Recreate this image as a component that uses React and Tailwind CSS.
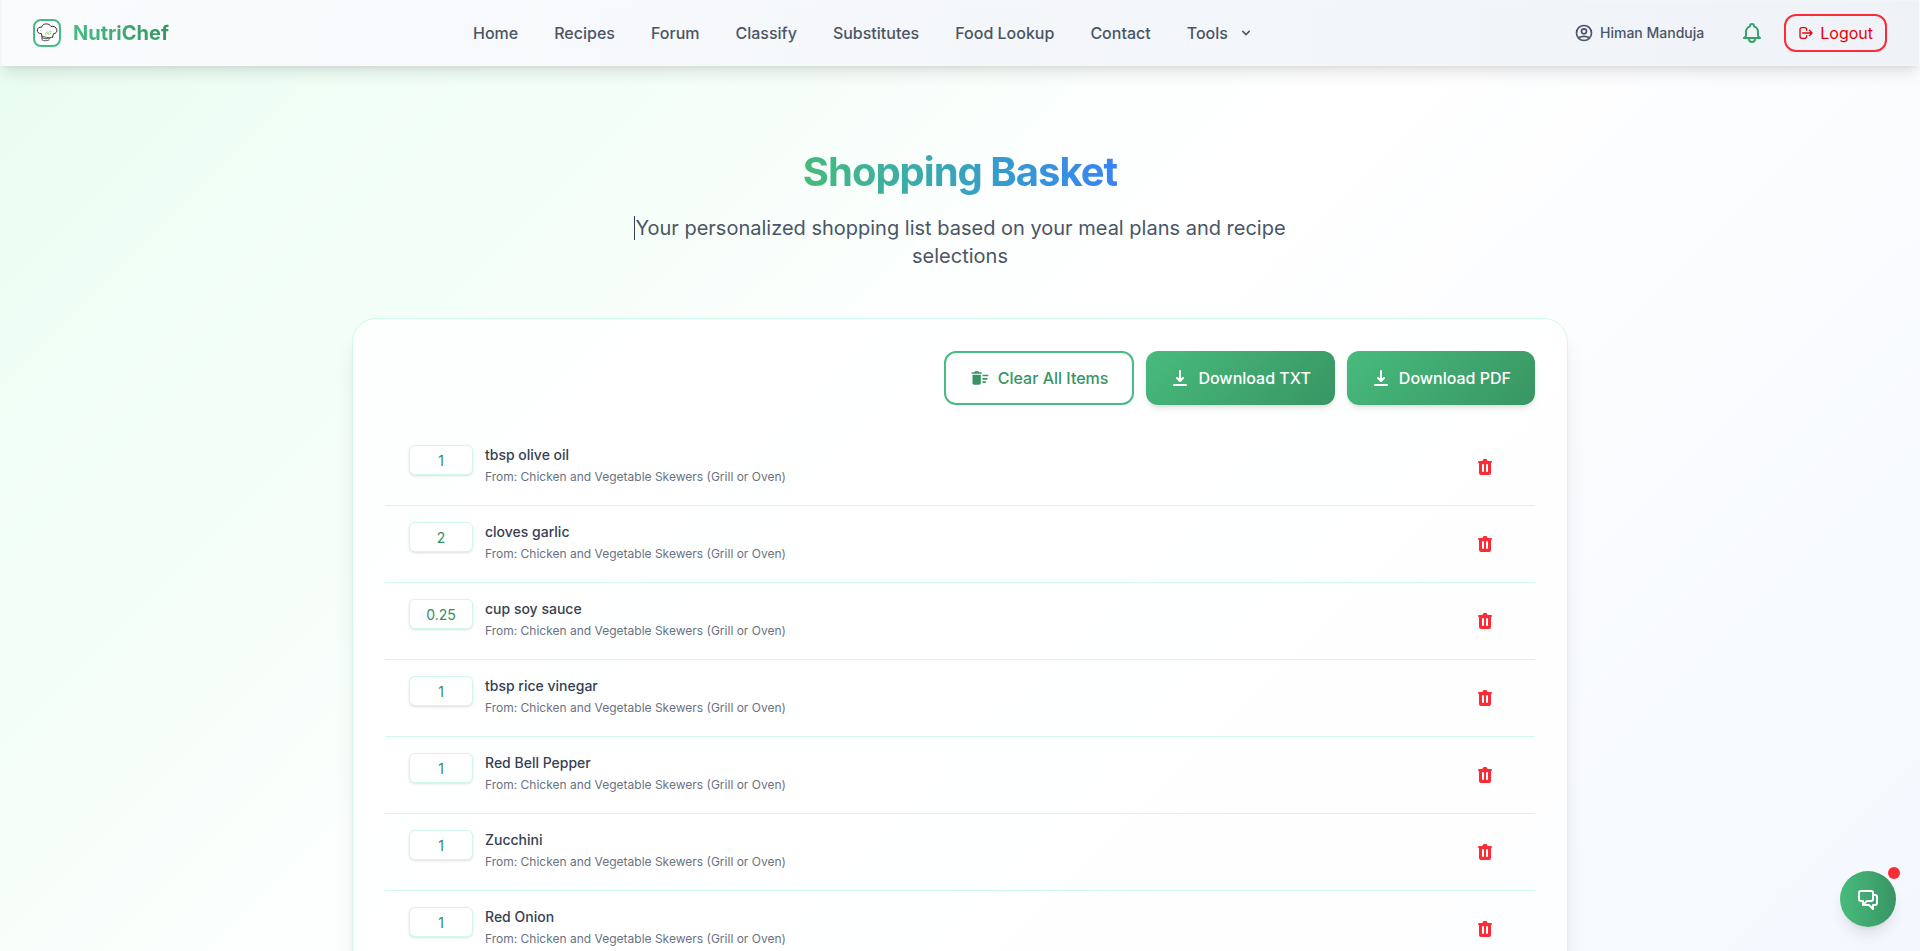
import React, { useState } from "react";
import {
  HiChevronDown,
  HiDownload,
  HiOutlineBell,
  HiOutlineChatAlt2,
  HiOutlineLogout,
  HiOutlineUserCircle,
  HiTrash,
} from "react-icons/hi";
import { MdDeleteSweep } from "react-icons/md";

const NAV_LINKS = ["Home", "Recipes", "Forum", "Classify", "Substitutes", "Food Lookup", "Contact"];

const SOURCE = "Chicken and Vegetable Skewers (Grill or Oven)";

const INITIAL_ITEMS = [
  { id: 1, quantity: "1", name: "tbsp olive oil" },
  { id: 2, quantity: "2", name: "cloves garlic" },
  { id: 3, quantity: "0.25", name: "cup soy sauce" },
  { id: 4, quantity: "1", name: "tbsp rice vinegar" },
  { id: 5, quantity: "1", name: "Red Bell Pepper" },
  { id: 6, quantity: "1", name: "Zucchini" },
  { id: 7, quantity: "1", name: "Red Onion" },
];

function ChefHat() {
  return (
    <svg viewBox="0 0 24 24" className="size-6" fill="none" aria-hidden="true">
      <path
        d="M7 15.2 6.4 12.6C3.6 12.6 2 11 2.3 9 2.6 7 4.4 5.8 6.5 6.2 7.3 4 9.2 2.8 11.4 2.9 13.6 2.9 15.1 3.9 16 5.4 18.6 4.8 21.2 6.2 21.8 8.6 22.2 11 20.7 12.6 18.4 12.8L17.6 16.4"
        stroke="#333"
        strokeWidth="1"
        strokeLinecap="round"
        strokeLinejoin="round"
      />
      <path d="M6.8 15.2C9.6 16.4 13.6 16.8 17.4 16.3M6.9 16.9C9.6 17.8 12.6 18 15 17.4M7 15.2V18.8C8.8 20 11.6 20.2 14 19" stroke="#444" strokeWidth="0.9" strokeLinecap="round" />
      <path d="M10.5 13.4C10.4 11.8 11.4 10.8 13 10.8 13 12.6 12.2 13.6 10.5 13.4ZM13.6 13.6C13.4 11.6 14.2 10.2 16 9.8 16.4 12 15.4 13.4 13.6 13.6Z" stroke="#a5d07f" strokeWidth="0.8" />
    </svg>
  );
}

function Header() {
  return (
    <header className="flex shrink-0 items-center justify-between border border-white/20 bg-linear-to-r from-[#fafbfd] to-[#eff3f8] px-8 py-[13px] shadow-lg">
      <a href="#home" className="flex items-center gap-3">
        <span className="flex size-7 items-center justify-center rounded-lg border-2 border-[#48bb84] bg-white">
          <ChefHat />
        </span>
        <span className="bg-linear-to-r from-[#48bb84] to-[#389563] bg-clip-text text-xl font-bold text-transparent">
          NutriChef
        </span>
      </a>

      <nav aria-label="Main" className="flex items-center gap-9 font-medium text-gray-600">
        {NAV_LINKS.map((label) => (
          <a key={label} href={"#" + label.toLowerCase().replace(" ", "-")}>
            {label}
          </a>
        ))}
        <button type="button" aria-haspopup="menu" className="flex items-center gap-2.5">
          Tools
          <HiChevronDown className="size-4" />
        </button>
      </nav>

      <div className="flex items-center">
        <a href="#profile" className="mr-9 flex items-center gap-1.5 pl-4 text-sm font-medium text-gray-600">
          <HiOutlineUserCircle className="size-5" />
          Himan Manduja
        </a>
        <button type="button" aria-label="Notifications" className="mr-5 text-[#38a169]">
          <HiOutlineBell className="size-6" />
        </button>
        <button
          type="button"
          className="flex items-center gap-1.5 rounded-xl border-2 border-[#fb2c36] px-3 py-1 leading-[26px] text-[#e7000b]"
        >
          <HiOutlineLogout className="size-4" />
          Logout
        </button>
      </div>
    </header>
  );
}

function BasketRow({ item, onQuantity, onRemove }) {
  return (
    <li className="flex items-center border-b border-[#cffbe6] px-6 py-4">
      <div className="flex grow gap-3 self-start">
        <input
          type="text"
          inputMode="decimal"
          aria-label={"Quantity of " + item.name}
          value={item.quantity}
          onChange={(event) => onQuantity(item.id, event.target.value)}
          className="h-[30px] w-16 rounded-md border border-[#cffbe6] bg-white text-center text-sm text-[#2f8f63] shadow-sm"
        />
        <div>
          <p className="text-sm font-medium text-gray-700">{item.name}</p>
          <p className="mt-1 text-xs text-gray-500">From: {SOURCE}</p>
        </div>
      </div>
      <button
        type="button"
        aria-label={"Remove " + item.name}
        onClick={() => onRemove(item.id)}
        className="px-4 py-3 text-[#fb2c36]"
      >
        <HiTrash className="size-5" />
      </button>
    </li>
  );
}

function DownloadButton({ children }) {
  return (
    <button
      type="button"
      className="flex items-center gap-2 rounded-xl bg-linear-135 from-[#48bb7d] to-[#389563] px-6 font-medium text-white shadow-md"
    >
      <HiDownload className="size-5" />
      {children}
    </button>
  );
}

export default function App() {
  const [items, setItems] = useState(INITIAL_ITEMS);

  const setQuantity = (id, quantity) =>
    setItems((list) => list.map((item) => (item.id === id ? { ...item, quantity } : item)));
  const removeItem = (id) => setItems((list) => list.filter((item) => item.id !== id));

  return (
    <div className="flex h-screen flex-col overflow-hidden bg-linear-135 from-[#e9fdf2] via-white to-[#f4f8fe] font-['Inter',sans-serif] text-base text-gray-800">
      <Header />

      <main className="mx-auto w-full max-w-7xl px-8 pt-20">
        <div className="mx-auto flex max-w-2xl flex-col items-center text-center">
          <h1 className="bg-linear-to-r from-[#48bb78] to-[#3b82f6] bg-clip-text text-[40px] leading-[52px] font-bold tracking-tight text-transparent">
            Shopping Basket
          </h1>
          <p className="mt-4 text-xl text-gray-600">
            <span className="border-l border-gray-700">Your</span> personalized shopping list based on your meal plans and recipe
            selections
          </p>
        </div>

        <section className="mt-12 rounded-3xl border border-[#cffbe6] bg-white/80 p-8 shadow-xl">
          <div className="flex justify-end gap-3">
            <button
              type="button"
              onClick={() => setItems([])}
              className="flex items-center gap-2 rounded-xl border-2 border-[#48bb84] bg-white px-6 py-3 leading-[26px] font-medium text-[#389563]"
            >
              <MdDeleteSweep className="size-5" />
              Clear All Items
            </button>
            <DownloadButton>Download TXT</DownloadButton>
            <DownloadButton>Download PDF</DownloadButton>
          </div>

          <ul className="mt-6">
            {items.map((item) => (
              <BasketRow key={item.id} item={item} onQuantity={setQuantity} onRemove={removeItem} />
            ))}
          </ul>
        </section>
      </main>

      <button
        type="button"
        aria-label="Open chat"
        className="fixed right-6 bottom-6 flex size-14 items-center justify-center rounded-full bg-linear-to-r from-[#48bb7d] to-[#389563] text-white shadow-lg"
      >
        <HiOutlineChatAlt2 className="size-6" />
        <span className="absolute -top-1 -right-1 size-3 rounded-full bg-[#fb2c36]" />
      </button>
    </div>
  );
}
